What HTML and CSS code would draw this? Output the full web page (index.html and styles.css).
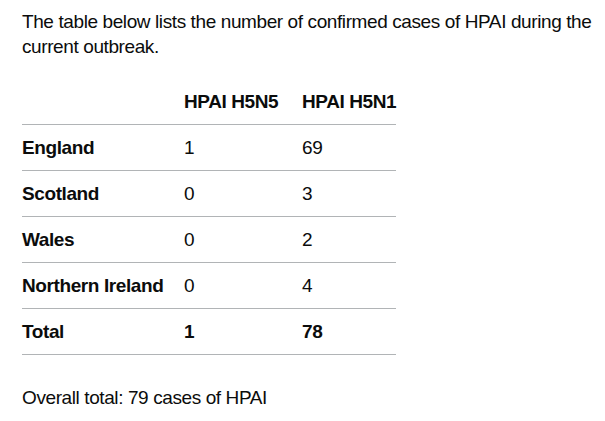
FILE: index.html
```html
<!DOCTYPE html>
<html lang="en">
<head>
<meta charset="utf-8">
<title>HPAI cases</title>
<link rel="stylesheet" href="styles.css">
</head>
<body>
<main class="content">
  <p class="body-text">The table below lists the number of confirmed cases of HPAI during the current outbreak.</p>
  <table class="cases">
    <colgroup>
      <col class="col-region">
      <col class="col-h5n5">
      <col class="col-h5n1">
    </colgroup>
    <thead>
      <tr>
        <th class="cell head"></th>
        <th class="cell head">HPAI H5N5</th>
        <th class="cell head">HPAI H5N1</th>
      </tr>
    </thead>
    <tbody>
      <tr>
        <th class="cell head">England</th>
        <td class="cell">1</td>
        <td class="cell">69</td>
      </tr>
      <tr>
        <th class="cell head">Scotland</th>
        <td class="cell">0</td>
        <td class="cell">3</td>
      </tr>
      <tr>
        <th class="cell head">Wales</th>
        <td class="cell">0</td>
        <td class="cell">2</td>
      </tr>
      <tr>
        <th class="cell head">Northern Ireland</th>
        <td class="cell">0</td>
        <td class="cell">4</td>
      </tr>
      <tr class="total">
        <th class="cell head">Total</th>
        <td class="cell">1</td>
        <td class="cell">78</td>
      </tr>
    </tbody>
  </table>
  <p class="body-text">Overall total: 79 cases of HPAI</p>
</main>
</body>
</html>
```

FILE: styles.css
```css
html, body {
  margin: 0;
  background: #ffffff;
}

body {
  color: #0b0c0c;
  font-family: "Liberation Sans", Arial, sans-serif;
  font-size: 19px;
  line-height: 25px;
  letter-spacing: -0.4px;
}

.content {
  padding: 9px 0 0 22px;
}

.body-text {
  margin: 0;
}

.cases {
  border-collapse: collapse;
  border-spacing: 0;
  table-layout: fixed;
  width: 374px;
  margin: 20px 0 30px;
}

.col-region { width: 162px; }
.col-h5n5 { width: 118px; }
.col-h5n1 { width: 94px; }

.cell {
  padding: 10px 20px 10px 0;
  text-align: left;
  vertical-align: top;
  border-bottom: 1px solid #b1b4b6;
  font-weight: 400;
  white-space: nowrap;
}

.cell:last-child {
  padding-right: 0;
}

.head,
.total .cell {
  font-weight: 700;
}
```
